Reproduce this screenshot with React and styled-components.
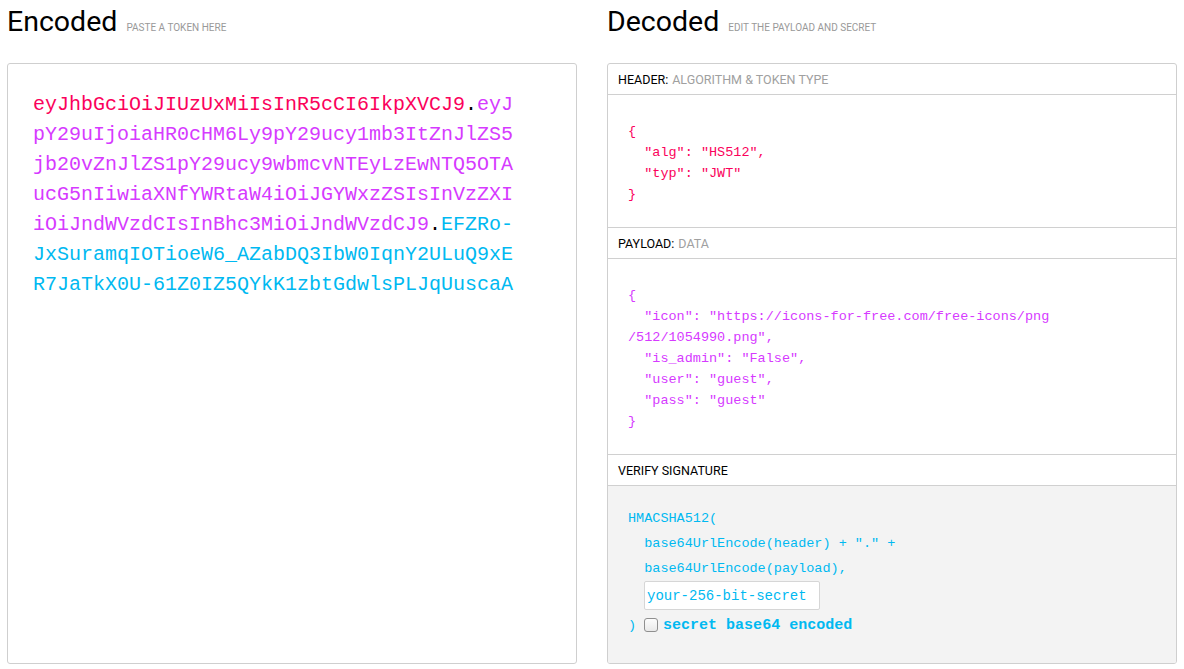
import React from "react";
import styled, { createGlobalStyle } from "styled-components";

const GlobalStyle = createGlobalStyle`
  body {
    margin: 0;
    background: #fff;
    font-family: Roboto, "Liberation Sans", sans-serif;
    color: #000;
  }
`;

const RED = "#fb015b";
const PURPLE = "#d63aff";
const CYAN = "#00b9f1";
const MONO = `"Liberation Mono", "DejaVu Sans Mono", monospace`;

const Page = styled.div`
  display: grid;
  grid-template-columns: 1fr 1fr;
  column-gap: 30px;
  padding: 0 7px;
  height: 669px;
  box-sizing: border-box;
`;

const Column = styled.div`
  display: flex;
  flex-direction: column;
`;

const TitleRow = styled.div`
  display: flex;
  align-items: baseline;
  height: 63px;
  padding-top: 5px;
  box-sizing: border-box;
`;

const Title = styled.h1`
  margin: 0;
  font-size: 28.5px;
  font-weight: 400;
  line-height: 34px;
`;

const Subtitle = styled.span`
  margin-left: 9px;
  font-size: 10px;
  color: #999;
  text-transform: uppercase;
`;

const Panel = styled.div`
  height: 601px;
  border: 1px solid #cfcfcf;
  border-radius: 3px;
  box-sizing: border-box;
  display: flex;
  flex-direction: column;
  overflow: hidden;
`;

const EncodedText = styled.div`
  padding: 26px 25px;
  font-family: ${MONO};
  font-size: 20px;
  line-height: 30px;
  white-space: pre;
`;

const Part = styled.span`
  color: ${(p) => p.$color};
`;

const SectionBar = styled.div`
  height: 30px;
  display: flex;
  align-items: center;
  padding-left: 10px;
  font-size: 12.5px;
  text-transform: uppercase;
  border-bottom: 1px solid #d0d0d0;
  flex-shrink: 0;
`;

const BarHint = styled.span`
  color: #a0a0a0;
  margin-left: 4px;
`;

const SectionBody = styled.div`
  padding: 26px 20px 0;
  height: ${(p) => p.$height}px;
  box-sizing: border-box;
  border-bottom: 1px solid #d0d0d0;
  flex-shrink: 0;
  font-family: ${MONO};
  font-size: 13.5px;
  line-height: 21px;
  color: ${(p) => p.$color};
  white-space: pre;
`;

const VerifyBody = styled.div`
  flex: 1;
  background: #f3f3f3;
  padding: 20px 20px 0;
  font-family: ${MONO};
  font-size: 13.5px;
  line-height: 25px;
  color: ${CYAN};
  white-space: pre;
`;

const SecretInput = styled.input`
  display: block;
  margin: 0 0 2px 16px;
  width: 176px;
  height: 29px;
  box-sizing: border-box;
  border: 1px solid #d6d6d6;
  border-radius: 2px;
  background: #fff;
  padding: 0 2px;
  font-family: ${MONO};
  font-size: 14px;
  color: ${CYAN};
  outline: none;
`;

const CheckRow = styled.div`
  display: flex;
  align-items: center;
  height: 26px;
`;

const Check = styled.span`
  width: 14px;
  height: 14px;
  margin: 0 5px 0 8px;
  border: 1px solid #8f8f8f;
  border-radius: 3px;
  background: linear-gradient(#fcfcfc, #e9e9e9);
  box-sizing: border-box;
`;

const CheckLabel = styled.span`
  font-weight: 700;
  font-size: 15px;
`;

const encodedLines = [
  [
    ["eyJhbGciOiJIUzUxMiIsInR5cCI6IkpXVCJ9", RED],
    [".", "#000"],
    ["eyJ", PURPLE],
  ],
  [["pY29uIjoiaHR0cHM6Ly9pY29ucy1mb3ItZnJlZS5", PURPLE]],
  [["jb20vZnJlZS1pY29ucy9wbmcvNTEyLzEwNTQ5OTA", PURPLE]],
  [["ucG5nIiwiaXNfYWRtaW4iOiJGYWxzZSIsInVzZXI", PURPLE]],
  [
    ["iOiJndWVzdCIsInBhc3MiOiJndWVzdCJ9", PURPLE],
    [".", "#000"],
    ["EFZRo-", CYAN],
  ],
  [["JxSuramqIOTioeW6_AZabDQ3IbW0IqnY2ULuQ9xE", CYAN]],
  [["R7JaTkX0U-61Z0IZ5QYkK1zbtGdwlsPLJqUuscaA", CYAN]],
];

const headerJson = ["{", '  "alg": "HS512",', '  "typ": "JWT"', "}"];

const payloadJson = [
  "{",
  '  "icon": "https://icons-for-free.com/free-icons/png',
  '/512/1054990.png",',
  '  "is_admin": "False",',
  '  "user": "guest",',
  '  "pass": "guest"',
  "}",
];

const App = () => {
  return (
    <>
      <GlobalStyle />
      <Page>
        <Column>
          <TitleRow>
            <Title>Encoded</Title>
            <Subtitle>Paste a token here</Subtitle>
          </TitleRow>
          <Panel>
            <EncodedText>
              {encodedLines.map((line, i) => (
                <div key={i}>
                  {line.map(([text, color], j) => (
                    <Part key={j} $color={color}>
                      {text}
                    </Part>
                  ))}
                </div>
              ))}
            </EncodedText>
          </Panel>
        </Column>

        <Column>
          <TitleRow>
            <Title>Decoded</Title>
            <Subtitle>Edit the payload and secret</Subtitle>
          </TitleRow>
          <Panel>
            <SectionBar>
              Header:<BarHint>Algorithm &amp; token type</BarHint>
            </SectionBar>
            <SectionBody $height={133} $color={RED}>
              {headerJson.map((l, i) => (
                <div key={i}>{l}</div>
              ))}
            </SectionBody>
            <SectionBar>
              Payload:<BarHint>Data</BarHint>
            </SectionBar>
            <SectionBody $height={196} $color={PURPLE}>
              {payloadJson.map((l, i) => (
                <div key={i}>{l}</div>
              ))}
            </SectionBody>
            <SectionBar>Verify signature</SectionBar>
            <VerifyBody>
              <div>HMACSHA512(</div>
              <div>{'  base64UrlEncode(header) + "." +'}</div>
              <div>{"  base64UrlEncode(payload),"}</div>
              <SecretInput defaultValue="your-256-bit-secret" />
              <CheckRow>
                <span>)</span>
                <Check />
                <CheckLabel>secret base64 encoded</CheckLabel>
              </CheckRow>
            </VerifyBody>
          </Panel>
        </Column>
      </Page>
    </>
  );
};

export default App;
